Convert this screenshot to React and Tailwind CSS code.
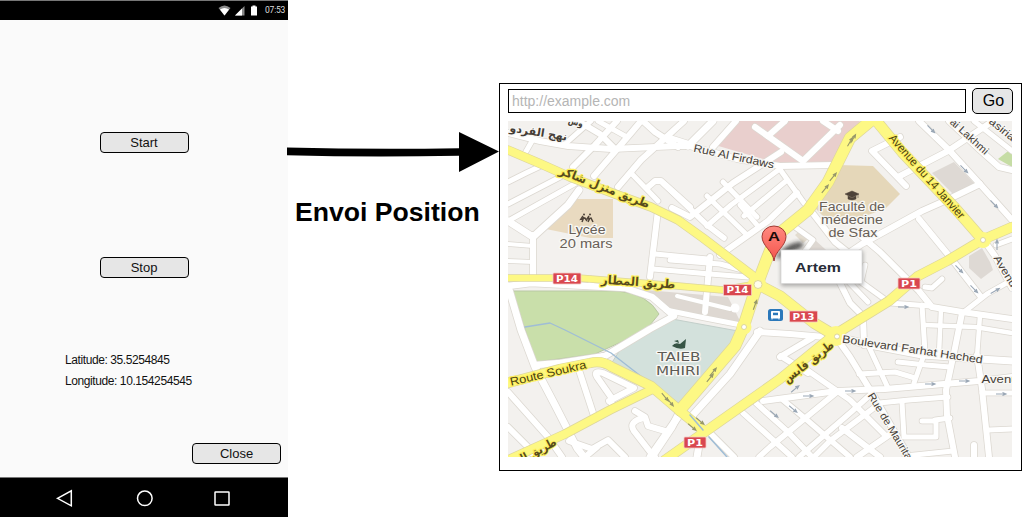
import React from "react";

const LABEL = "font-['Liberation_Sans','DejaVu_Sans',sans-serif]";

// [path, width]
const STREETS = [
  ["M508 133L540 141L568 146L611 149L678 146L690 146L737 159L780 166L835 165", 6],
  ["M565 144L591 121", 5],
  ["M508 182L526 173L543 165", 5],
  ["M524 155L532 141", 5],
  ["M508 204L566 174", 5],
  ["M508 221L576 183", 5],
  ["M573 167L595 145L617 121", 6],
  ["M594 176L631 133L641 121", 6],
  ["M578 121L600 134L614 148", 6],
  ["M598 121L625 136", 5],
  ["M643 121L655 132L678 147", 6],
  ["M618 187L641 160L684 121", 6],
  ["M631 173L658 201", 5],
  ["M648 187L655 181L661 181L690 207", 6],
  ["M668 137L687 143", 5],
  ["M688 146L713 121", 7],
  ["M713 147L736 121", 6],
  ["M755 127L803 161L840 125", 6],
  ["M768 136L785 121", 6],
  ["M823 121L838 131", 6],
  ["M781 152L733 183L690 217L672 208", 6],
  ["M664 184L707 225L724 238", 5.5],
  ["M707 196L747 235", 5],
  ["M723 182L757 217", 5],
  ["M779 168L804 203", 5],
  ["M777 171L731 205L707 226", 5],
  ["M786 181L744 216", 5],
  ["M797 193L768 221L720 255", 6],
  ["M740 205L757 225", 5],
  ["M670 260L720 264L750 272", 5],
  ["M653 269L710 274L748 277", 5],
  ["M710 257L705 312", 6],
  ["M677 296L730 309", 4],
  ["M666 310L700 317L741 325", 5],
  ["M508 221L533 237L568 205L579 190", 7],
  ["M533 235L533 275", 6],
  ["M508 244L533 246", 4],
  ["M508 261L533 262", 4],
  ["M658 210L650 277", 6],
  ["M655 254L708 259", 5],
  ["M508 286L531 283L625 288L652 297L674 316L650 329L605 356L560 363L536 365", 6.5],
  ["M591 279L591 286", 5],
  ["M508 286L521 330L535 367L555 405L577 448L584 457", 7],
  ["M508 392L548 437L562 457", 6],
  ["M508 427L527 446L535 457", 6],
  ["M578 367L595 419", 6],
  ["M612 407L611 397L597 377Q593 370 603 373L634 388L609 401", 6],
  ["M603 356L605 365", 6],
  ["M569 441L592 449L608 440L625 457", 6],
  ["M635 411L645 417L648 426L665 431", 6],
  ["M643 418Q628 422 634 431L651 453L655 457", 6],
  ["M678 417L650 457", 7],
  ["M585 457L597 447", 6],
  ["M760 331L730 374L691 417", 7],
  ["M682 407L672 427L652 457", 7],
  ["M700 439L697 457", 7],
  ["M710 433L734 457", 6],
  ["M743 413L792 457", 5.5],
  ["M756 403L787 431L812 457", 5.5],
  ["M783 400L807 420L850 457", 5.5],
  ["M763 401L837 391L885 389L979 381L1012 377", 6],
  ["M797 363L850 400L886 436", 5.5],
  ["M837 392L770 447L759 457", 5.5],
  ["M869 396L850 413L799 457", 5.5],
  ["M879 404L830 441L814 457", 5.5],
  ["M889 435L857 457", 6],
  ["M842 428L880 457", 6],
  ["M757 332L790 334L825 337", 6],
  ["M780 357L812 338", 6],
  ["M781 356L808 373", 6],
  ["M837 337L875 346L922 355L980 359L1012 361", 7],
  ["M838 340L850 357L872 393L909 457", 6],
  ["M869 347L888 388", 5],
  ["M859 374L895 372L915 378", 5],
  ["M898 362L926 365L950 367", 5],
  ["M922 305L925 352L914 383", 5],
  ["M962 313L955 348L946 390L947 415L955 457", 6],
  ["M977 355L982 389L989 457", 6],
  ["M879 403L909 400L948 397", 5],
  ["M902 402L904 437L936 437L936 421L922 421", 5],
  ["M935 420L950 418", 5],
  ["M905 456L953 451", 5],
  ["M974 457L974 445", 6],
  ["M989 430L1012 429", 5],
  ["M982 393L1012 393", 5],
  ["M828 267L862 244L922 211L949 199L980 184", 6],
  ["M855 231L880 252L919 291L932 307L962 312L1012 319", 6],
  ["M919 219L950 257L981 297", 6],
  ["M964 312L987 294L1012 280", 5],
  ["M865 265L861 282L890 303L930 306", 5],
  ["M840 283L850 303L863 316L864 345", 6],
  ["M941 309L939 354", 4.5],
  ["M925 325L975 327L1012 333", 4.5],
  ["M980 315L977 357", 4.5],
  ["M925 287L932 288L942 279", 5],
  ["M985 242L995 256L1012 288", 6],
  ["M1012 239L996 245", 5],
  ["M919 121L949 150L979 183L1012 220", 6],
  ["M949 121L980 150L999 167L1012 170", 6],
  ["M993 121L948 151L898 177", 6],
  ["M906 186L872 151L900 137", 6],
  ["M974 121L1012 151", 5],
  ["M845 278L868 302", 5],
  ["M811 211L835 242L850 254", 6],
  ["M795 227L813 240L796 263", 5],
];

const AVENUES = [
  ["M508 150L541 164L570 177L615 194L651 207L678 220L703 238L757 279", 8],
  ["M874 118L850 138L828 182L808 210L776 236L766 261L757 285L743 328L735 346L680 410", 11],
  ["M874 118L902 152L955 208L982 239", 10],
  ["M1012 227L982 240L947 261L918 276L889 301L834 335L780 379L709 429L665 460", 9],
  ["M508 278L578 278L678 286L723 290L757 284", 6],
  ["M757 284L780 296L814 323L834 335", 10],
  ["M508 383L560 369L590 363Q602 360 612 367L651 386L680 411L704 431", 9],
  ["M508 460L565 434L610 410L653 389", 8],
];

const ARROWS = [
  [850, 142, -60], [825, 189, -50], [833, 177, -50], [853, 139, -60], [755, 305, -70],
  [713, 372, -50], [710, 378, -50], [665, 397, 50], [670, 402, 50],
  [700, 421, 40], [692, 427, 40], [795, 389, -40], [808, 396, 0],
  [774, 414, 40], [793, 409, 40], [850, 391, 0], [930, 384, 0], [964, 381, 0], [1001, 394, 0],
  [903, 307, 0], [959, 269, 45], [974, 289, 45], [995, 291, -30], [997, 245, -90],
  [931, 129, 45], [964, 169, 45], [994, 204, 45],
];

function Shield({ x, y, w, text }) {
  return (
    <g>
      <rect x={x} y={y} width={w} height="11" rx="1" fill="#d9474f" stroke="#f4c9c4" strokeWidth="0.8" />
      <text x={x + w / 2} y={y + 8.8} textAnchor="middle" fontSize="9" fontWeight="700" fill="#fff" textLength={w - 6} lengthAdjust="spacingAndGlyphs" className="font-['DejaVu_Sans',sans-serif]">{text}</text>
    </g>
  );
}

function Label({ x, y, r = 0, w, size = 12, halo = "#f8f7f4", fill = "#453d36", weight = 400, className = "", children }) {
  const shared = {
    fontSize: size,
    fontWeight: weight,
    textAnchor: "middle",
    textLength: w,
    lengthAdjust: "spacingAndGlyphs",
  };
  return (
    <text
      {...shared}
      transform={`translate(${x} ${y}) rotate(${r})`}
      fill={fill}
      stroke={halo}
      strokeWidth="2.5"
      strokeLinejoin="round"
      paintOrder="stroke"
      className={className}
    >
      {children}
    </text>
  );
}

function ArabicLabel(props) {
  return <Label weight={700} className="font-['DejaVu_Sans',sans-serif]" {...props} />;
}

function CityMap() {
  return (
    <svg viewBox="508 121 504 336" className={`block h-[336px] w-[504px] overflow-hidden ${LABEL}`}>
      <defs>
        <filter id="shade" x="-30%" y="-30%" width="160%" height="170%">
          <feGaussianBlur stdDeviation="2" />
        </filter>
        <linearGradient id="pin" x1="0" y1="0" x2="0" y2="1">
          <stop offset="0" stopColor="#ff8a80" />
          <stop offset="1" stopColor="#f4544c" />
        </linearGradient>
      </defs>
      <rect x="508" y="121" width="504" height="336" fill="#f3f1ee" />

      <path d="M715 145L739 121H860L835 165L780 164Z" fill="#e9cfcd" />
      <path d="M546 229L571 199H613V238H590Z" fill="#e9dac0" />
      <path d="M838 165L873 166L900 194L885 209L862 217H824L814 207Z" fill="#e5d7b9" />
      <path d="M932 173L954 162L975 184L955 196Z" fill="#ded9d4" />
      <path d="M969 256L982 248L990 262L993 270L981 279L969 268Z" fill="#ded9d4" />
      <path d="M998 159L1012 148V167Z" fill="#c6dda5" />
      <path d="M512 291L618 291Q648 294 659 314L645 331L595 354L536 362Z" fill="#c9dfaa" stroke="#b9c9a3" />
      <path d="M634 289L728 297L742 325L674 312Z" fill="#ded8d2" />
      <path d="M672 319L738 331L727 352L680 404L654 386L611 364L620 350Z" fill="#d3e1dc" stroke="#c3cfca" />
      <path d="M795 235L802 229L811 237L803 243Z" fill="#e3dccf" />
      <path d="M805 254L815 240L835 258Z" fill="#ded8d2" />

      <g fill="none" strokeLinecap="round" strokeLinejoin="round">
        {STREETS.map(([d, w], i) => (
          <path key={i} d={d} stroke="#dcd8d1" strokeWidth={w + 1.5} />
        ))}
        {STREETS.map(([d, w], i) => (
          <path key={i} d={d} stroke="#fff" strokeWidth={w} />
        ))}
        <path d="M525 327L550 323L565 330L611 353L651 384" stroke="#9fbdd6" strokeWidth="1.3" />
        {AVENUES.map(([d, w], i) => (
          <path key={i} d={d} stroke="#ddd69b" strokeWidth={w + 1.4} />
        ))}
        {AVENUES.map(([d, w], i) => (
          <path key={i} d={d} stroke="#fdf884" strokeWidth={w} />
        ))}
        <path d="M690 415L703 430M709 437L727 457" stroke="#9fbdd6" strokeWidth="1.5" />
      </g>
      <circle cx="757" cy="284" r="9" fill="#fdf884" />
      <circle cx="758" cy="284.5" r="4" fill="#fffce9" stroke="#ddd69b" />
      <circle cx="744" cy="327" r="7.5" fill="#fdf884" />
      <circle cx="744" cy="327" r="2.5" fill="#fff" stroke="#ddd69b" />
      <circle cx="836" cy="336" r="10" fill="#fdf884" />
      <circle cx="837" cy="336.5" r="2.5" fill="#fff" stroke="#ddd69b" />
      <circle cx="983" cy="240" r="8" fill="#fdf884" />
      <circle cx="983" cy="240" r="2.5" fill="#fff" stroke="#ddd69b" />
      <circle cx="735" cy="308" r="4.5" fill="#fff" />

      {ARROWS.map(([x, y, r], i) => (
        <path key={i} d="M-5 0H4M1.500 -1.500L5 0L1.500 1.500" transform={`translate(${x} ${y}) rotate(${r})`} fill="none" stroke={i < 11 ? "#96976a" : "#9aa7b5"} strokeWidth="1.100" />
      ))}

      <ArabicLabel x={538} y={136} r={9} w={58} size={11}>نهج الفردو</ArabicLabel>
      <ArabicLabel x={575} y={125} r={16} w={15} size={9}>وس</ArabicLabel>
      <ArabicLabel x={603} y={191} r={21} w={96} size={12} halo="#fdf060" fill="#574b1c">طريق منزل شاكر</ArabicLabel>
      <ArabicLabel x={638} y={286} r={4} w={74} size={12} halo="#fdf060" fill="#574b1c">طريق المطار</ArabicLabel>
      <ArabicLabel x={811} y={365} r={-38} w={60} size={12} halo="#fdf060" fill="#574b1c">طريق قابس</ArabicLabel>
      <ArabicLabel x={538} y={455} r={-28} w={44} size={12} halo="#fdf060" fill="#574b1c">طريق ال</ArabicLabel>
      <Label x={733} y={160} r={12} w={82} size={11}>Rue Al Firdaws</Label>
      <Label x={924} y={179} r={48.5} w={108} size={11.5} halo="#fdf060" fill="#4a3f10">Avenue du 14 Janvier</Label>
      <Label x={967} y={139} r={42} w={48} size={10.5}>ai Lakhmi</Label>
      <Label x={1000} y={132} r={39} w={30} size={10.5}>asiria</Label>
      <Label x={549} y={377} r={-13} w={78} size={11.5} halo="#fdf060" fill="#4a3f10">Route Soukra</Label>
      <Label x={912} y={353} r={8.5} w={142} size={11}>Boulevard Farhat Hached</Label>
      <Label x={887} y={428} r={59} w={76} size={10.5}>Rue de Maurita</Label>
      <Label x={1000} y={383} w={37} size={11}>Avenu</Label>
      <Label x={1004} y={276} r={59} w={42} size={10.5}>Avenue</Label>

      <Label x={587} y={234} w={37} fill="#685f57">Lycée</Label>
      <Label x={586} y={248} w={53} fill="#685f57">20 mars</Label>
      <Label x={852} y={211} w={66} fill="#685f57">Faculté de</Label>
      <Label x={852} y={224} w={62} fill="#685f57">médecine</Label>
      <Label x={853} y={237} w={49} fill="#685f57">de Sfax</Label>
      <Label x={679} y={361} w={43} fill="#5d5b56" className="font-['DejaVu_Sans',sans-serif]">TAIEB</Label>
      <Label x={678} y={375} w={44} fill="#5d5b56" className="font-['DejaVu_Sans',sans-serif]">MHIRI</Label>

      <path d="M845 194L852 191L859 194L852 197.500ZM848 196V199Q852 201 856 199V196L852 198ZM858 194V198" fill="#4e4339" stroke="#4e4339" strokeWidth="0.500" />
      <g fill="none" stroke="#4e4339" strokeWidth="1.500">
        <path d="M583 216L581 219L585 218L587 221M584 217L582 222M589 216L587 219L591 218L593 222M590 218L588 222" />
        <circle cx="584" cy="214.500" r="1" fill="#4e4339" stroke="none" />
        <circle cx="590" cy="214.500" r="1" fill="#4e4339" stroke="none" />
      </g>
      <path d="M672 346Q675 342 680 344L686 339L685 348Q679 350 672 346ZM674 341L678 340L679 343Z" fill="#365445" />

      <Shield x={553} y={273} w={28} text="P14" />
      <Shield x={723.5} y={284.5} w={28} text="P14" />
      <Shield x={789.5} y={311} w={28} text="P13" />
      <Shield x={898} y={278} w={22} text="P1" />
      <Shield x={684} y={437} w={22} text="P1" />

      <rect x="768" y="309" width="15" height="12" rx="2.500" fill="#2b78ba" />
      <path d="M771.500 311.500H779.500V318H771.500ZM772 318V319.500M779 318V319.500" fill="#fff" stroke="#fff" />
      <path d="M773 312.700H778V315.200H773Z" fill="#2b78ba" />

      <path d="M775 259Q784 244 799 242Q807 243 801 248L781 257Z" fill="#222" opacity="0.750" filter="url(#shade)" />
      <rect x="781" y="251" width="82" height="35" fill="#777" opacity="0.600" filter="url(#shade)" />
      <rect x="781" y="250" width="81" height="33.500" fill="#fff" stroke="#d5d5d5" strokeWidth="0.700" />
      <text x="795" y="272" fontSize="12" fontWeight="700" fill="#282c38" textLength="46" lengthAdjust="spacingAndGlyphs">Artem</text>
      <path d="M774 261C773 251 762 246 762 236.500A12 10.500 0 0 1 786 236.500C786 246 775 251 774 261Z" fill="url(#pin)" stroke="#a23a34" strokeWidth="1" />
      <text x="774" y="240.500" textAnchor="middle" fontSize="12" fontWeight="700" fill="#1b0b0a" textLength="12" lengthAdjust="spacingAndGlyphs">A</text>
    </svg>
  );
}

function PhoneButton({ children, className = "" }) {
  return (
    <button className={`flex h-[21px] w-[89px] shrink-0 items-center justify-center rounded-[4px] border border-black bg-[#e6e6e6] pb-px text-[13px] leading-none text-[#111] ${className}`}>
      {children}
    </button>
  );
}

function Phone() {
  return (
    <section className="flex h-full w-[288px] shrink-0 flex-col bg-[#fafafa]">
      <header className="flex h-5 shrink-0 items-center justify-end border-t border-[#777] bg-black pr-[2px]">
        <svg viewBox="0 0 40 11" className="mr-[7px] h-[11px] w-10">
          <path d="M0.500 3Q6.500 -2 12.500 3L6.500 10.500Z" fill="#8b8b8b" />
          <path d="M2 4.500Q6.500 1.500 11 4.500L6.500 10.500Z" fill="#fff" />
          <path d="M17 10.500L26.500 1V10.500Z" fill="#8b8b8b" />
          <path d="M17 10.500L24 3.500V10.500Z" fill="#fff" />
          <path d="M33 1.500H34.500V0.500H37.500V1.500H39V10.500H33Z" fill="#fff" />
        </svg>
        <span className="w-[21px] whitespace-nowrap font-['Roboto',sans-serif] text-[8.5px] leading-none tracking-[-0.2px] text-[#ddd]">07:53</span>
      </header>
      <main className="flex grow flex-col">
        <PhoneButton className="mt-28 self-center">Start</PhoneButton>
        <PhoneButton className="mt-[104px] self-center">Stop</PhoneButton>
        <div className="mt-[72px] ml-[65px] text-[12px] leading-[21px] tracking-[-0.41px] text-[#111]">
          <p>Latitude: 35.5254845</p>
          <p>Longitude: 10.154254545</p>
        </div>
        <PhoneButton className="mt-[51px] mr-[7px] self-end">Close</PhoneButton>
      </main>
      <footer className="flex h-10 shrink-0 items-center border-t border-[#777] bg-black">
        <svg viewBox="0 0 288 39" className="h-[39px] w-72" fill="none" stroke="#fff" strokeWidth="1.500">
          <path d="M57.500 20.300L71.300 12.800V27.800Z" />
          <circle cx="144.800" cy="20.300" r="7.300" />
          <rect x="215" y="14" width="14" height="13" rx="0.500" />
        </svg>
      </footer>
    </section>
  );
}

export default function App() {
  return (
    <div className="flex h-[517px] w-[1022px] overflow-hidden bg-white font-['Liberation_Sans',Arial,sans-serif]">
      <Phone />
      <section className="flex w-[211px] shrink-0 flex-col pt-[132px]">
        <svg viewBox="0 0 212 40" className="-ml-px h-10 w-[212px]">
          <path d="M0 15.500Q85 17.500 172 16.200V0L212 19.500L172 40V23.700Q85 25.500 0 23.300Z" />
        </svg>
        <p className="mt-6 ml-[7px] text-[26.6px] leading-8 font-bold whitespace-nowrap text-black">Envoi Position</p>
      </section>
      <section className="mt-[83px] flex h-[388px] w-[523px] shrink-0 flex-col border border-black bg-white px-2 pt-1">
        <div className="mb-[7px] flex h-[26px] shrink-0 items-center gap-1.5">
          <div className="flex h-6 w-[458px] shrink-0 items-center border border-black pl-[3px] text-[14px] text-[#b5b5b5]">http://example.com</div>
          <button className="flex h-[26px] w-[41px] shrink-0 items-center justify-center rounded-[5px] border border-black bg-[#e6e6e6] pl-0.5 text-[16px] leading-none text-black">Go</button>
        </div>
        <CityMap />
      </section>
    </div>
  );
}
